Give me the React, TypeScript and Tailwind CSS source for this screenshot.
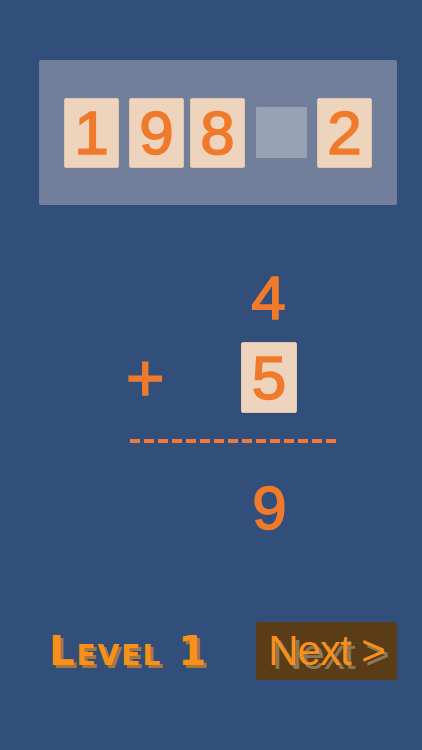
export default function App() {
  const code = ["1", "9", "8", null, "2"];
  const gaps = ["", "ml-[10px]", "ml-[6px]", "ml-[11px]", "ml-[10px]"];

  return (
    <div className="w-[422px] h-[750px] bg-[#324e7a] overflow-hidden flex flex-col font-['Liberation_Sans',Arial,sans-serif]">
      {/* code panel */}
      <div className="mt-[60px] ml-[39px] w-[358px] h-[145px] bg-[#717f9a] rounded-[2px] flex items-center justify-center">
        {code.map((d, i) =>
          d ? (
            <div
              key={i}
              className={`${gaps[i]} w-[55px] h-[70px] bg-[#efd4bd] rounded-[2px] border border-[#e2c5ad] flex items-center justify-center text-[62px] leading-none text-[#f07a2b] [-webkit-text-stroke:1.6px_#f07a2b]`}
            >
              {d}
            </div>
          ) : (
            <div key={i} className={`${gaps[i]} w-[51px] h-[51px] bg-[#97a2b5] rounded-[1px]`} />
          )
        )}
      </div>

      {/* sum */}
      <div className="mt-[62px] ml-[241px] w-[55px] text-center text-[62px] leading-none text-[#f07a2b] [-webkit-text-stroke:1.6px_#f07a2b]">4</div>

      <div className="mt-[13px] flex items-center pl-[126px]">
        <span className="w-[115px] text-[66px] leading-none text-[#f07a2b] [-webkit-text-stroke:1.6px_#f07a2b]">+</span>
        <div className="w-[56px] h-[71px] bg-[#efd4bd] rounded-[2px] border border-[#e2c5ad] flex items-center justify-center text-[62px] leading-none text-[#f07a2b] [-webkit-text-stroke:1.6px_#f07a2b]">
          5
        </div>
      </div>

      <div className="mt-[26px] ml-[130px] flex gap-[4px]">
        {Array.from({ length: 15 }).map((_, i) => (
          <div key={i} className="w-[10px] h-[4px] bg-[#ef7a36]" />
        ))}
      </div>

      <div className="mt-[34px] ml-[242px] w-[55px] text-center text-[62px] leading-none text-[#f07a2b] [-webkit-text-stroke:1.6px_#f07a2b]">9</div>

      {/* footer */}
      <div className="mt-[83px] flex items-center pl-[49px]">
        <span className="font-['DejaVu_Sans',sans-serif] font-bold text-[40px] leading-none tracking-[2px] [font-variant:small-caps] text-[#f8901b] [text-shadow:3px_3px_0_#a5783a]">
          Level 1
        </span>
        <button className="ml-auto mr-[25px] w-[141px] h-[58px] bg-[#5a3c17] rounded-[2px] flex items-center justify-center text-[42px] leading-none text-[#f8901b] tracking-[-1px] [text-shadow:4px_4px_0_#8a7a55]">
          Next &gt;
        </button>
      </div>
    </div>
  );
}
